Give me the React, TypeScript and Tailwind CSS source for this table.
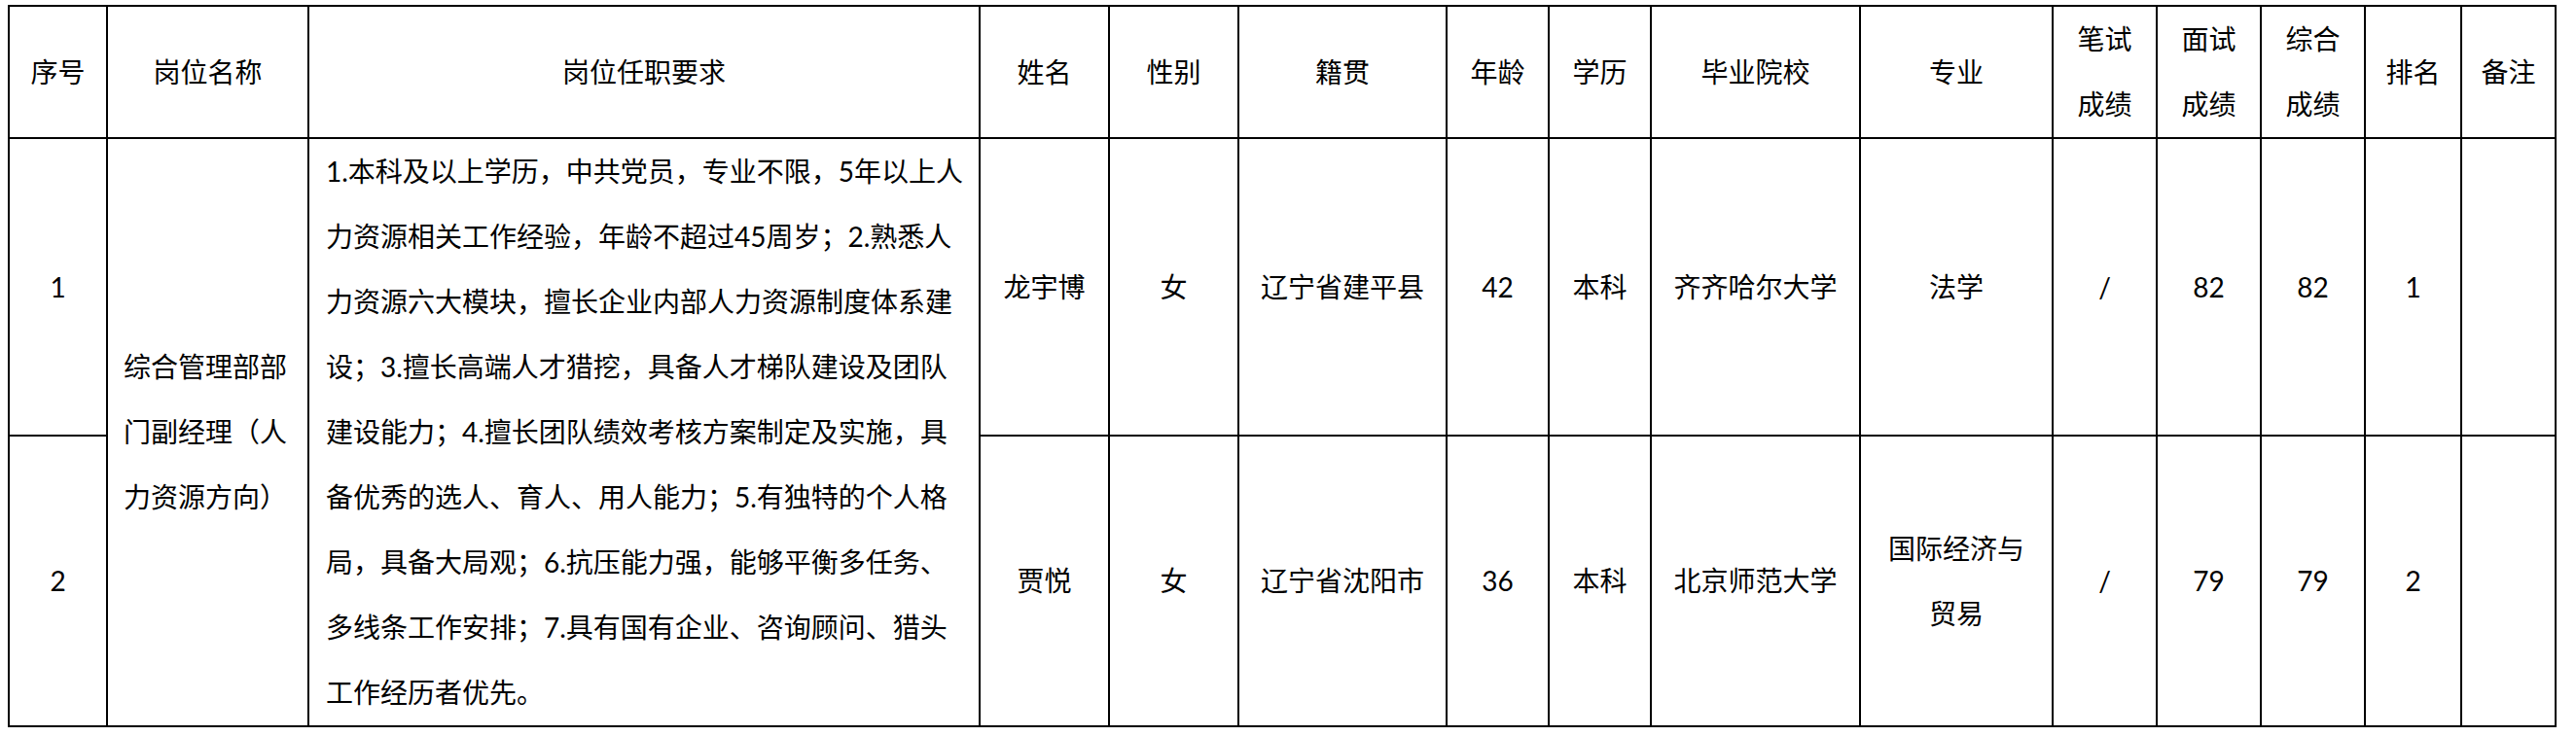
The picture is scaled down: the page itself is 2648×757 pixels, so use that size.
import React from 'react';

const headers: { label: string[] }[] = [
  { label: ['序号'] },
  { label: ['岗位名称'] },
  { label: ['岗位任职要求'] },
  { label: ['姓名'] },
  { label: ['性别'] },
  { label: ['籍贯'] },
  { label: ['年龄'] },
  { label: ['学历'] },
  { label: ['毕业院校'] },
  { label: ['专业'] },
  { label: ['笔试', '成绩'] },
  { label: ['面试', '成绩'] },
  { label: ['综合', '成绩'] },
  { label: ['排名'] },
  { label: ['备注'] },
];

const jobTitle = ['综合管理部部', '门副经理（人', '力资源方向）'];

const requirements = [
  '1.本科及以上学历，中共党员，专业不限，5年以上人',
  '力资源相关工作经验，年龄不超过45周岁；2.熟悉人',
  '力资源六大模块，擅长企业内部人力资源制度体系建',
  '设；3.擅长高端人才猎挖，具备人才梯队建设及团队',
  '建设能力；4.擅长团队绩效考核方案制定及实施，具',
  '备优秀的选人、育人、用人能力；5.有独特的个人格',
  '局，具备大局观；6.抗压能力强，能够平衡多任务、',
  '多线条工作安排；7.具有国有企业、咨询顾问、猎头',
  '工作经历者优先。',
];

type Candidate = {
  no: string;
  name: string;
  gender: string;
  origin: string;
  age: string;
  degree: string;
  school: string;
  major: string[];
  written: string;
  interview: string;
  total: string;
  rank: string;
  note: string;
};

const candidates: Candidate[] = [
  {
    no: '1',
    name: '龙宇博',
    gender: '女',
    origin: '辽宁省建平县',
    age: '42',
    degree: '本科',
    school: '齐齐哈尔大学',
    major: ['法学'],
    written: '/',
    interview: '82',
    total: '82',
    rank: '1',
    note: '',
  },
  {
    no: '2',
    name: '贾悦',
    gender: '女',
    origin: '辽宁省沈阳市',
    age: '36',
    degree: '本科',
    school: '北京师范大学',
    major: ['国际经济与', '贸易'],
    written: '/',
    interview: '79',
    total: '79',
    rank: '2',
    note: '',
  },
];

const Cell = ({ lines }: { lines: string[] }) => (
  <div className="bg-white flex flex-col items-center justify-center text-center leading-[67px] whitespace-nowrap">
    {lines.map((l, i) => (
      <span key={i}>{l}</span>
    ))}
  </div>
);

export default function App() {
  return (
    <div
      className="w-[2648px] h-[757px] bg-white text-black text-[28px] pt-[5px] pl-[8px]"
      style={{ fontFamily: 'Lato, "Noto Sans CJK SC", sans-serif' }}
    >
      <div className="inline-grid grid-cols-[99px_205px_688px_131px_131px_212px_103px_103px_213px_196px_105px_105px_105px_97px_95px] grid-rows-[134px_304px_297px] gap-[2px] bg-black border-2 border-black">
        {headers.map((h, i) => (
          <Cell key={i} lines={h.label} />
        ))}

        {candidates.map((c, idx) => (
          <React.Fragment key={c.no}>
            <Cell lines={[c.no]} />
            {idx === 0 && (
              <>
                <div className="row-span-2 bg-white flex flex-col justify-center pl-[16px] leading-[67px] whitespace-nowrap">
                  {jobTitle.map((l) => (
                    <span key={l}>{l}</span>
                  ))}
                </div>
                <div className="row-span-2 bg-white flex flex-col justify-center pl-[17px] leading-[67px] whitespace-nowrap">
                  {requirements.map((l) => (
                    <span key={l}>{l}</span>
                  ))}
                </div>
              </>
            )}
            <Cell lines={[c.name]} />
            <Cell lines={[c.gender]} />
            <Cell lines={[c.origin]} />
            <Cell lines={[c.age]} />
            <Cell lines={[c.degree]} />
            <Cell lines={[c.school]} />
            <Cell lines={c.major} />
            <Cell lines={[c.written]} />
            <Cell lines={[c.interview]} />
            <Cell lines={[c.total]} />
            <Cell lines={[c.rank]} />
            <Cell lines={[c.note]} />
          </React.Fragment>
        ))}
      </div>
    </div>
  );
}
